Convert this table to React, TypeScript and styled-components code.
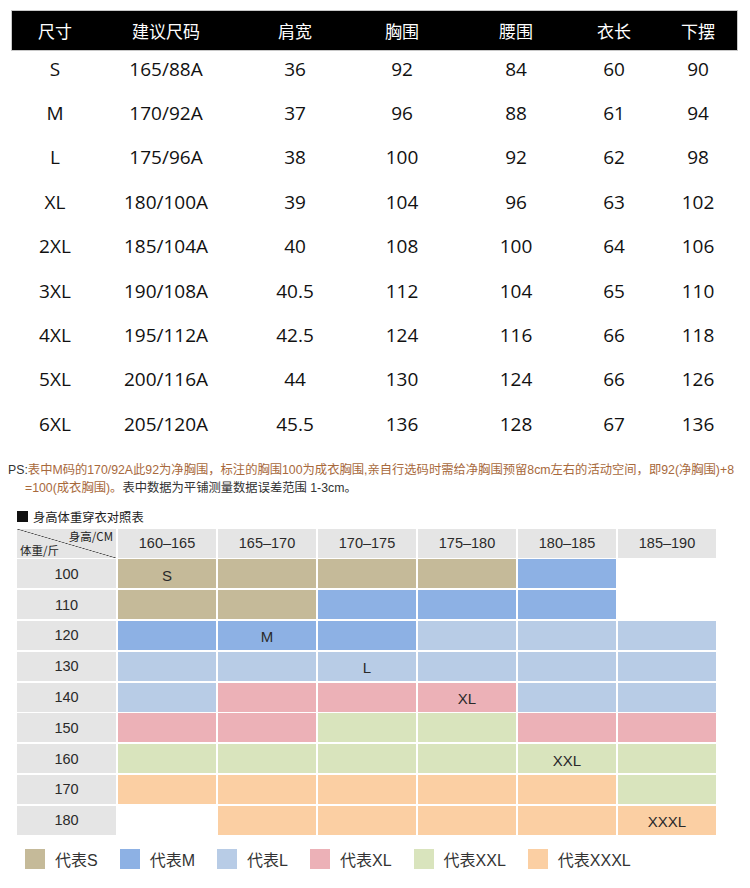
import { Fragment } from "react";
import styled, { createGlobalStyle } from "styled-components";

const GlobalStyle = createGlobalStyle`
  body {
    margin: 0;
    background: #fff;
  }
`;

const Page = styled.div`
  width: 750px;
  height: 888px;
  overflow: hidden;
  background: #fff;
`;

// 上面的尺码表
const SIZE_COLS = "58px 164px 94px 120px 108px 88px 80px";

const SizeTable = styled.div`
  margin: 11px 13px 0 12px;
`;

const HeadRow = styled.div`
  display: grid;
  grid-template-columns: ${SIZE_COLS};
  padding-left: 14px;
  height: 39px;
  align-items: center;
  background: #000;
  box-shadow: 0 0 0 1px #c8c8c8;
`;

const HeadCell = styled.div`
  text-align: center;
  color: #fff;
  font-family: "Noto Sans CJK SC", "Noto Sans", sans-serif;
  font-size: 17px;
  line-height: 1;
`;

const DataRow = styled.div`
  display: grid;
  grid-template-columns: ${SIZE_COLS};
  padding: 0 0 6px 14px;
  height: 44.4px;
  box-sizing: border-box;
  align-items: center;
`;

const DataCell = styled.div`
  text-align: center;
  color: #111;
  font-family: "Open Sans", "Liberation Sans", sans-serif;
  font-size: 19px;
  line-height: 1;
`;

// 说明文字
const Note = styled.div`
  margin: 11px 0 0 8px;
  font-family: "Liberation Sans", "Noto Sans CJK SC", sans-serif;
  font-size: 12.3px;
  line-height: 18px;
  white-space: nowrap;
  color: #a8693c;
`;

const NoteLine = styled.div<{ $indent?: boolean }>`
  padding-left: ${(p) => (p.$indent ? "17px" : "0")};
`;

const Dark = styled.span`
  color: #333;
`;

const ChartTitle = styled.div`
  display: flex;
  align-items: center;
  gap: 5px;
  margin: 12px 0 0 17px;
  height: 16px;
  font-family: "Noto Sans CJK SC", sans-serif;
  font-size: 12.3px;
  color: #222;
`;

const Square = styled.span`
  width: 11px;
  height: 11px;
  background: #111;
`;

// 身高体重对照表
const Chart = styled.div`
  display: grid;
  grid-template-columns: 99px repeat(6, 98px);
  grid-auto-rows: 29px;
  column-gap: 2px;
  row-gap: 1.8px;
  margin: 4px 0 0 17px;
  font-family: "Liberation Sans", "Noto Sans CJK SC", sans-serif;
  color: #2a2a2a;
`;

const GrayCell = styled.div`
  display: flex;
  align-items: center;
  justify-content: center;
  background: #e5e5e5;
  font-size: 14.5px;
`;

const CornerCell = styled.div`
  position: relative;
  background: #e5e5e5
    linear-gradient(
      to top right,
      transparent calc(50% - 0.6px),
      #444 50%,
      transparent calc(50% + 0.6px)
    );
  font-family: "Noto Sans CJK SC", sans-serif;
  font-size: 11.5px;
  color: #222;
`;

const CornerLabel = styled.span<{ $top?: boolean }>`
  position: absolute;
  line-height: 1;
  ${(p) => (p.$top ? "top: 2px; right: 3px;" : "bottom: 1px; left: 3px;")}
`;

type Size = "S" | "M" | "L" | "XL" | "XXL" | "XXXL" | "";

const COLORS: Record<string, string> = {
  S: "#c5ba99",
  M: "#8db1e4",
  L: "#b8cce6",
  XL: "#ecb1b7",
  XXL: "#d9e4bd",
  XXXL: "#fbcfa3",
};

const ColorCell = styled.div<{ $size: Size }>`
  display: flex;
  align-items: center;
  justify-content: center;
  padding-top: 3px;
  box-sizing: border-box;
  background: ${(p) => (p.$size ? COLORS[p.$size] : "transparent")};
  font-size: 15px;
  color: #2a2a2a;
`;

const Legend = styled.div`
  display: flex;
  align-items: center;
  gap: 22px;
  margin: 12px 0 0 25px;
  font-family: "Liberation Sans", "Noto Sans CJK SC", sans-serif;
  font-size: 16px;
  color: #333;
`;

const LegendItem = styled.div`
  display: flex;
  align-items: center;
  gap: 10px;
`;

const Swatch = styled.span<{ $color: string }>`
  width: 20px;
  height: 20px;
  background: ${(p) => p.$color};
`;

const HEAD = ["尺寸", "建议尺码", "肩宽", "胸围", "腰围", "衣长", "下摆"];

const ROWS = [
  ["S", "165/88A", "36", "92", "84", "60", "90"],
  ["M", "170/92A", "37", "96", "88", "61", "94"],
  ["L", "175/96A", "38", "100", "92", "62", "98"],
  ["XL", "180/100A", "39", "104", "96", "63", "102"],
  ["2XL", "185/104A", "40", "108", "100", "64", "106"],
  ["3XL", "190/108A", "40.5", "112", "104", "65", "110"],
  ["4XL", "195/112A", "42.5", "124", "116", "66", "118"],
  ["5XL", "200/116A", "44", "130", "124", "66", "126"],
  ["6XL", "205/120A", "45.5", "136", "128", "67", "136"],
];

const HEIGHTS = ["160–165", "165–170", "170–175", "175–180", "180–185", "185–190"];

// 每行: 体重, 各身高列的尺码, label = 显示尺码文字的列
const GRID: { w: string; cells: Size[]; label?: number }[] = [
  { w: "100", cells: ["S", "S", "S", "S", "M", ""], label: 0 },
  { w: "110", cells: ["S", "S", "M", "M", "M", ""] },
  { w: "120", cells: ["M", "M", "M", "L", "L", "L"], label: 1 },
  { w: "130", cells: ["L", "L", "L", "L", "L", "L"], label: 2 },
  { w: "140", cells: ["L", "XL", "XL", "XL", "L", "L"], label: 3 },
  { w: "150", cells: ["XL", "XL", "XXL", "XXL", "XL", "XL"] },
  { w: "160", cells: ["XXL", "XXL", "XXL", "XXL", "XXL", "XXL"], label: 4 },
  { w: "170", cells: ["XXXL", "XXXL", "XXXL", "XXXL", "XXXL", "XXL"] },
  { w: "180", cells: ["", "XXXL", "XXXL", "XXXL", "XXXL", "XXXL"], label: 5 },
];

const LEGEND: Size[] = ["S", "M", "L", "XL", "XXL", "XXXL"];

export default function App() {
  return (
    <Page>
      <GlobalStyle />
      <SizeTable>
        <HeadRow>
          {HEAD.map((h) => (
            <HeadCell key={h}>{h}</HeadCell>
          ))}
        </HeadRow>
        {ROWS.map((r) => (
          <DataRow key={r[0]}>
            {r.map((v, i) => (
              <DataCell key={i}>{v}</DataCell>
            ))}
          </DataRow>
        ))}
      </SizeTable>

      <Note>
        <NoteLine>
          <Dark>PS:</Dark>表中M码的170/92A此92为净胸围，标注的胸围100为成衣胸围,亲自行选码时需给净胸围预留8cm左右的活动空间，即92(净胸围)+8
        </NoteLine>
        <NoteLine $indent>
          =100(成衣胸围)。<Dark>表中数据为平铺测量数据误差范围 1-3cm。</Dark>
        </NoteLine>
      </Note>

      <ChartTitle>
        <Square />
        身高体重穿衣对照表
      </ChartTitle>

      <Chart>
        <CornerCell>
          <CornerLabel $top>身高/CM</CornerLabel>
          <CornerLabel>体重/斤</CornerLabel>
        </CornerCell>
        {HEIGHTS.map((h) => (
          <GrayCell key={h}>{h}</GrayCell>
        ))}
        {GRID.map((row) => (
          <Fragment key={row.w}>
            <GrayCell>{row.w}</GrayCell>
            {row.cells.map((s, i) => (
              <ColorCell key={i} $size={s}>
                {row.label === i ? s : null}
              </ColorCell>
            ))}
          </Fragment>
        ))}
      </Chart>

      <Legend>
        {LEGEND.map((s) => (
          <LegendItem key={s}>
            <Swatch $color={COLORS[s]} />
            代表{s}
          </LegendItem>
        ))}
      </Legend>
    </Page>
  );
}
